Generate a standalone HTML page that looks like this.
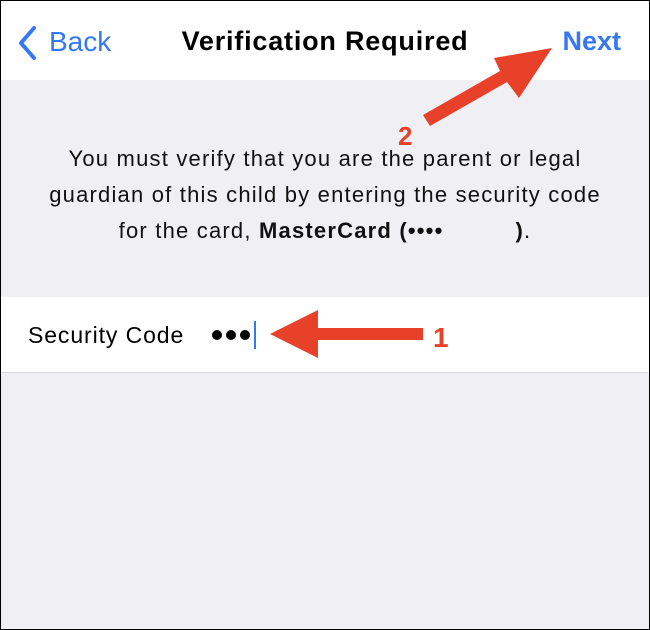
<!DOCTYPE html>
<html><head><style>
body{margin:0;width:650px;height:630px;overflow:hidden;font-family:"Liberation Sans",sans-serif;}
.wrap{position:absolute;left:0;top:0;width:648px;height:628px;border:1px solid #000;background:#efeff4;}
.nav{position:absolute;left:0;top:0;width:648px;height:79px;background:#fff;}
.back{position:absolute;left:48px;top:25px;font-size:28px;color:#3478f6;}
.title{position:absolute;left:0;width:648px;text-align:center;top:25px;font-size:27px;letter-spacing:0.8px;font-weight:bold;color:#000;}
.next{position:absolute;right:28px;top:25px;font-size:27px;font-weight:bold;color:#3478f6;}
.msg{position:absolute;left:0;width:648px;top:140px;text-align:center;font-size:22px;letter-spacing:1.2px;line-height:36px;color:#111;}
.row{position:absolute;left:0;top:296px;width:648px;height:75px;background:#fff;border-bottom:1px solid #d8d8dc;}
.lab{position:absolute;left:27px;top:25px;font-size:23px;letter-spacing:0.9px;color:#000;}
.caret{position:absolute;left:253px;top:24px;width:2px;height:28px;background:#3478f6;}
</style></head><body>
<div class="wrap">
<div class="nav">
<svg style="position:absolute;left:13px;top:24px" width="26" height="36"><path d="M20 3 L7 18 L20 33" stroke="#3478f6" stroke-width="4" fill="none" stroke-linecap="round" stroke-linejoin="round"/></svg>
<div class="back">Back</div>
<div class="title">Verification Required</div>
<div class="next">Next</div>
</div>
<div class="msg">You must verify that you are the parent or legal<br>guardian of this child by entering the security code<br>for the card, <b>MasterCard (••••<span style="display:inline-block;width:72px"></span>)</b>.</div>
<div class="row"><div class="lab">Security Code</div>
<svg style="position:absolute;left:208px;top:28px" width="46" height="20"><circle cx="8" cy="10" r="5" fill="#000"/><circle cx="22" cy="10" r="5" fill="#000"/><circle cx="36" cy="10" r="5" fill="#000"/></svg>
<div class="caret"></div></div>
</div>
<svg style="position:absolute;left:0;top:0" width="650" height="630">
<path d="M423 328 L318 328 L318 310 L270 334 L318 358 L318 340 L423 340 Z" fill="#e8412a"/>
<text x="433" y="347" font-family="Liberation Sans" font-weight="bold" font-size="28" fill="#e8412a">1</text>
<path d="M430 126 L507 82 L519 98 L552 48 L494 58 L500 71 L423 115 Z" fill="#e8412a"/>
<text x="398" y="145" font-family="Liberation Sans" font-weight="bold" font-size="26" fill="#e8412a">2</text>
</svg>
</body></html>
